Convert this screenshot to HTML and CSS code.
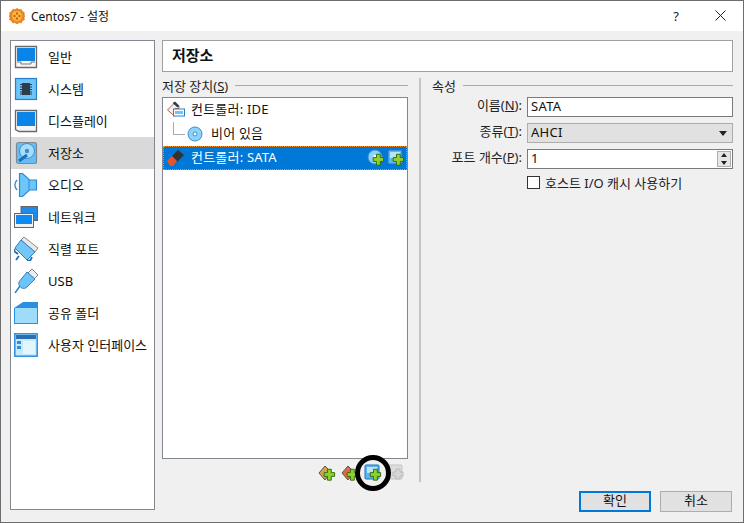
FILE: index.html
```html
<!DOCTYPE html>
<html lang="ko">
<head>
  <meta charset="UTF-8">
  <meta name="viewport" content="width=device-width, initial-scale=1.0">
  <title>Centos7 - 설정</title>
  <link rel="stylesheet" href="styles.css">
</head>
<body>
  <div class="window">
    <header class="titlebar">
      <svg class="app-icon" width="16" height="16" viewBox="0 0 16 16">
        <path d="M8 .5l2 1.300 2.300-.3 1 2 2 1.200-.3 2.300 .7 1-.7 1.500 .3 2.200-2 1.100-1 2-2.300-.2-2 1.200-2-1.200-2.300 .2-1-2-2-1.100 .3-2.200-.7-1.500 .7-1-.3-2.300 2-1.200 1-2 2.300 .3z" fill="#f08a1c" stroke="#c9600f" stroke-width=".6"/>
        <circle cx="8" cy="8" r="4.800" fill="#fbc24a"/>
        <circle cx="8" cy="5.500" r="1.200" fill="#c8601a"/><circle cx="5.500" cy="8" r="1.200" fill="#c8601a"/><circle cx="10.500" cy="8" r="1.200" fill="#c8601a"/><circle cx="8" cy="10.500" r="1.200" fill="#c8601a"/>
      </svg>
      <span class="title-text">Centos7 - 설정</span>
      <span class="help-btn">?</span>
      <svg class="close-btn" width="11" height="11" viewBox="0 0 11 11"><path d="M.5 .5l10 10M10.500 .5l-10 10" stroke="#222" fill="none"/></svg>
    </header>

    <div class="content">
      <ul class="sidebar">
        <li class="side-item">
          <svg width="24" height="24" viewBox="0 0 24 24"><path d="M1.500 1.500h21v21h-21z" fill="#f6f6f6" stroke="#6a6a6a" stroke-width="1.300"/><path d="M3 3h18v13H3z" fill="#0a84e6"/><path d="M3 17h4v2h10v-2h4" stroke="#777" fill="none"/></svg>
          <span>일반</span>
        </li>
        <li class="side-item">
          <svg width="24" height="24" viewBox="0 0 24 24"><rect x="1.500" y="1.500" width="21" height="21" fill="#6cc4f8" stroke="#2a7fc9" stroke-width="1.200"/><rect x="8" y="6" width="8" height="12" fill="#2d3c4c"/><path d="M6 7.500h12M6 10h12M6 12.500h12M6 15h12M6 17h12" stroke="#2d3c4c"/></svg>
          <span>시스템</span>
        </li>
        <li class="side-item">
          <svg width="24" height="24" viewBox="0 0 24 24"><path d="M1.500 1.500h21v21H5l-3.500-2z" fill="#f6f6f6" stroke="#6a6a6a" stroke-width="1.300"/><path d="M3 3h18v14H3z" fill="#0a84e6"/></svg>
          <span>디스플레이</span>
        </li>
        <li class="side-item active">
          <svg width="24" height="24" viewBox="0 0 24 24"><rect x="2.500" y="1.500" width="20" height="21" rx="2" fill="#66bdf5" stroke="#7c8a96" stroke-width="1.200"/><circle cx="13" cy="10" r="7.500" fill="#a9dcfb" stroke="#3a8ed0"/><circle cx="13" cy="10" r="2.200" fill="#3a8ed0"/><path d="M5 20l8-6" stroke="#1c6fb8" stroke-width="3"/></svg>
          <span>저장소</span>
        </li>
        <li class="side-item">
          <svg width="24" height="24" viewBox="0 0 24 24"><path d="M5.500 .5h3l7 6.500h7v10h-7l-7 6.500h-3z" fill="#6cc6f8" stroke="#2f8ad2" stroke-width="1.200"/><path d="M15 7v10" stroke="#2f8ad2"/><path d="M3 7c-2.500 3-2.500 7 0 10" stroke="#2f8ad2" stroke-width="1.300" fill="none"/></svg>
          <span>오디오</span>
        </li>
        <li class="side-item">
          <svg width="24" height="24" viewBox="0 0 24 24"><rect x="7" y="1.500" width="16.500" height="14" fill="#1d8ce8" stroke="#666"/><rect x=".5" y="8.500" width="19" height="14" fill="#f1f1f1" stroke="#666"/><rect x="2" y="10" width="16" height="9" fill="#0f8af0"/></svg>
          <span>네트워크</span>
        </li>
        <li class="side-item">
          <svg width="24" height="24" viewBox="0 0 24 24"><path d="M10 0l14 11-3 4L7 3z" fill="#e8e8e8" stroke="#8a8a8a"/><path d="M7 3l14 12-8 8L1 11z" fill="#74c6f6" stroke="#2c7fc4"/><path d="M1 12l-1 2 4 3M13 23l3 1 2-4M5 19l-3 4" stroke="#1c6fb8" stroke-width="1.800" fill="none"/></svg>
          <span>직렬 포트</span>
        </li>
        <li class="side-item">
          <svg width="24" height="24" viewBox="0 0 24 24"><path d="M18 0l6 6-4 4-6-6z" fill="#eee" stroke="#888"/><path d="M13 3l8 7-8 8c-2 2-5 2-7-.5s-1.500-4.500 .5-6.500z" fill="#6cc4f8" stroke="#2c7fc4"/><path d="M6 17l-5 7" stroke="#2c7fc4" stroke-width="1.500"/></svg>
          <span class="latin">USB</span>
        </li>
        <li class="side-item">
          <svg width="24" height="24" viewBox="0 0 24 24"><path d="M0 7l9-6h15v22H0z" fill="#2a8fe0"/><path d="M1 7h22v15H1z" fill="#9fdcfb"/></svg>
          <span>공유 폴더</span>
        </li>
        <li class="side-item">
          <svg width="24" height="24" viewBox="0 0 24 24"><rect x=".8" y=".8" width="22.400" height="22.400" fill="#c6e9fb" stroke="#2a8fe0" stroke-width="1.500"/><path d="M2 2h20v4H2z" fill="#2b6fb0"/><path d="M3 8h4v3H3zM3 13h4v3H3z" fill="#2a8fe0"/><path d="M9 8h12v13H9z" fill="#e3f5fd"/></svg>
          <span>사용자 인터페이스</span>
        </li>
      </ul>

      <div class="page">
        <div class="page-title">저장소</div>
        <div class="panes">
          <section class="storage-pane">
            <div class="group-title"><span>저장 장치(<u>S</u>)</span><i></i></div>
            <div class="tree">
              <div class="tree-row">
                <svg width="18" height="18" viewBox="0 0 18 18"><path d="M.5 9l7.500-7.500 4 4v2H8v5.500L7.500 15z" fill="#f2f2f2" stroke="#b55e46"/><path d="M5.500 2l2.500-1.500 4.500 4.500-2 1.500z" fill="#3b3b3b"/><rect x="6.500" y="8" width="11" height="7" fill="#fff" stroke="#2a7fc9"/><rect x="8" y="10" width="8" height="3" fill="#6cc4f8"/></svg>
                <span>컨트롤러: IDE</span>
              </div>
              <div class="tree-row child">
                <svg width="16" height="16" viewBox="0 0 16 16"><circle cx="8" cy="8" r="7" fill="#8fd2f9" stroke="#3a8ed0"/><circle cx="8" cy="8" r="2" fill="#fff" stroke="#3a8ed0"/></svg>
                <span>비어 있음</span>
              </div>
              <div class="tree-row selected">
                <svg width="18" height="18" viewBox="0 0 18 18"><path d="M5 7l6-6 6 5-7 7z" fill="#333"/><path d="M0 12l5-5 5 5-4 5H3z" fill="#e8532c"/></svg>
                <span>컨트롤러: SATA</span>
                <span class="row-actions">
                  <svg width="18" height="18" viewBox="0 0 18 18"><use href="#disc-add"/></svg>
                  <svg width="18" height="18" viewBox="0 0 18 18"><use href="#drive-add"/></svg>
                </span>
              </div>
            </div>
            <div class="tree-toolbar">
              <svg width="18" height="18" viewBox="0 0 18 18"><path d="M1 9l6-7 6 6-6 8z" fill="#d3a24c" stroke="#555"/><use href="#plus"/></svg>
              <svg width="18" height="18" viewBox="0 0 18 18"><path d="M1 9l6-7 6 6-6 8z" fill="#e8663c" stroke="#555"/><use href="#plus"/></svg>
              <span class="add-drive">
                <svg width="18" height="18" viewBox="0 0 18 18"><use href="#drive-add"/></svg>
              </span>
              <svg width="18" height="18" viewBox="0 0 18 18"><rect x="1" y="1" width="14" height="14" rx="1" fill="#dcdcdc" stroke="#c4c4c4"/><path d="M6 8h3V5h4v3h3v4h-3v3H9v-3H6z" fill="#d6d6d6" stroke="#bbb"/></svg>
            </div>
          </section>

          <section class="attr-pane">
            <div class="group-title"><span>속성</span><i></i></div>
            <div class="form">
              <label>이름(<u>N</u>):</label>
              <div class="field">SATA</div>
              <label>종류(<u>T</u>):</label>
              <div class="field combo">AHCI<b class="arrow"></b></div>
              <label>포트 개수(<u>P</u>):</label>
              <div class="field spin">1
                <span class="spin-btns"><b class="up"></b><b class="down"></b></span>
              </div>
              <div class="check-row"><span class="checkbox"></span><span>호스트 I/O 캐시 사용하기</span></div>
            </div>
          </section>
        </div>
      </div>
    </div>

    <footer class="footer">
      <button class="btn primary">확인</button>
      <button class="btn">취소</button>
    </footer>
  </div>

  <svg width="0" height="0" class="defs">
    <defs>
      <g id="plus"><path d="M7 8h3.500V4.500h4V8H18v4h-3.500v4h-4v-4H7z" transform="translate(-.5 1) scale(.95)" fill="#8fd12c" stroke="#2f6d10"/></g>
      <g id="disc-add"><circle cx="8" cy="8" r="7" fill="#8fd2f9" stroke="#3a8ed0"/><circle cx="8" cy="8" r="2" fill="#fff"/><use href="#plus"/></g>
      <g id="drive-add"><rect x="1" y="1" width="14" height="14" rx="1" fill="#5cb6f5" stroke="#1e72bd"/><path d="M3 3h10v6H3z" fill="#b9e4fb"/><use href="#plus"/></g>
    </defs>
  </svg>
</body>
</html>
```
FILE: styles.css
```css
* {
  box-sizing: border-box;
}

html, body {
  height: 100%;
}

body {
  margin: 0;
  overflow: hidden;
  background: #f0f0f0;
  color: #111;
  font-family: "Noto Sans", "Noto Sans CJK KR", sans-serif;
  font-size: 13px;
}

.defs {
  position: absolute;
}

.window {
  display: flex;
  flex-direction: column;
  height: 523px;
  border: 1px solid #6d6d6d;
  background: #f0f0f0;
}

/* title bar */
.titlebar {
  display: flex;
  align-items: center;
  height: 30px;
  padding: 0 0 1px 8px;
  background: #fff;
  flex-shrink: 0;
}

.title-text {
  margin-left: 6px;
  font-size: 12px;
}

.help-btn {
  margin-left: auto;
  font-size: 13px;
  color: #222;
}

.close-btn {
  margin-left: 36px;
  margin-right: 17px;
}

/* main area */
.content {
  display: flex;
  flex: 1;
  min-height: 0;
  padding: 9px 10px 0 9px;
  gap: 7px;
}

.sidebar {
  width: 145px;
  height: 470px;
  margin: 0;
  padding: 0;
  list-style: none;
  background: #fff;
  border: 1px solid #828790;
  flex-shrink: 0;
}

.side-item {
  display: flex;
  align-items: center;
  height: 32px;
  padding-left: 3px;
  gap: 10px;
  white-space: nowrap;
}

.side-item span {
  padding-bottom: 2px;
}

.side-item .latin {
  padding-bottom: 0;
}

.side-item svg {
  flex-shrink: 0;
}

.side-item.active {
  background: #d9d9d9;
}

.page {
  flex: 1;
  min-width: 0;
}

.page-title {
  height: 32px;
  padding-left: 9px;
  line-height: 29px;
  font-size: 15px;
  font-weight: 700;
  background: #fff;
  border: 1px solid #a0a0a0;
}

.panes {
  display: flex;
  margin-top: 6px;
}

.group-title {
  display: flex;
  align-items: center;
  height: 14px;
  gap: 7px;
  margin-bottom: 5px;
  white-space: nowrap;
  color: #222;
}

.group-title i {
  flex: 1;
  height: 1px;
  background: #a9a9a9;
}

/* storage tree */
.storage-pane {
  width: 246px;
}

.tree {
  height: 362px;
  background: #fff;
  border: 1px solid #828790;
}

.tree-row {
  display: flex;
  align-items: center;
  height: 24px;
  padding-left: 4px;
  gap: 6px;
}

.tree-row span {
  padding-bottom: 3px;
  letter-spacing: .2px;
}

.tree-row.child {
  padding-left: 24px;
  gap: 8px;
  background: linear-gradient(#aaa, #aaa) 10px 0 / 1px 12px no-repeat,
              linear-gradient(#aaa, #aaa) 10px 12px / 12px 1px no-repeat;
}

.tree-row.selected {
  color: #fff;
  background: #0078d7;
  outline: 1px dotted #f28c28;
  outline-offset: -1px;
}

.row-actions {
  display: flex;
  margin-left: auto;
  margin-right: 2px;
  gap: 2px;
}

.tree-row .row-actions {
  padding-bottom: 0;
}

.tree-toolbar {
  display: flex;
  justify-content: flex-end;
  align-items: center;
  height: 20px;
  margin-top: 4px;
  padding-right: 3px;
  gap: 5px;
}

.add-drive {
  position: relative;
  display: flex;
}

/* the hand drawn ring around the add button */
.add-drive::after {
  content: "";
  position: absolute;
  left: -9px;
  top: -9px;
  box-sizing: border-box;
  width: 36px;
  height: 36px;
  border: 5px solid #000;
  border-radius: 50%;
}

/* attributes */
.attr-pane {
  flex: 1;
  margin-left: 11px;
  height: 404px;
  padding-left: 11px;
  border-left: 2px solid #c4c4c4;
}

.form {
  display: grid;
  grid-template-columns: 90px 1fr;
  column-gap: 5px;
  row-gap: 6px;
  align-items: center;
}

.form label {
  padding-bottom: 3px;
  line-height: 17px;
  text-align: right;
  white-space: nowrap;
  color: #222;
}

.field {
  position: relative;
  height: 20px;
  padding-left: 3px;
  line-height: 16px;
  letter-spacing: .3px;
  background: #fff;
  border: 1px solid #7a7a7a;
}

.combo {
  background: #e1e1e1;
  border-color: #adadad;
}

.arrow {
  position: absolute;
  right: 5px;
  top: 7px;
  border: 4px solid transparent;
  border-top: 5px solid #222;
  border-bottom: 0;
}

.spin-btns {
  position: absolute;
  right: 1px;
  top: 1px;
  display: flex;
  flex-direction: column;
  width: 14px;
  height: 16px;
  background: #e6e6e6;
  border: 1px solid #adadad;
}

.spin-btns b {
  flex: 1;
  position: relative;
}

.spin-btns .up::after,
.spin-btns .down::after {
  content: "";
  position: absolute;
  left: 3px;
  border: 3px solid transparent;
}

.spin-btns .up::after {
  top: 1px;
  border-top: 0;
  border-bottom: 4px solid #222;
}

.spin-btns .down::after {
  top: 2px;
  border-bottom: 0;
  border-top: 4px solid #222;
}

.check-row {
  grid-column: 2;
  display: flex;
  align-items: center;
  gap: 5px;
  height: 14px;
  color: #222;
}

.checkbox {
  width: 13px;
  height: 13px;
  background: #fff;
  border: 1px solid #333;
}

/* footer */
.footer {
  display: flex;
  justify-content: flex-end;
  gap: 9px;
  padding: 0 11px 10px 0;
  flex-shrink: 0;
}

.btn {
  width: 72px;
  height: 21px;
  padding: 0 0 2px;
  font: inherit;
  line-height: 15px;
  color: #111;
  background: #e1e1e1;
  border: 1px solid #adadad;
}

.btn.primary {
  border: 2px solid #0078d7;
}
```
